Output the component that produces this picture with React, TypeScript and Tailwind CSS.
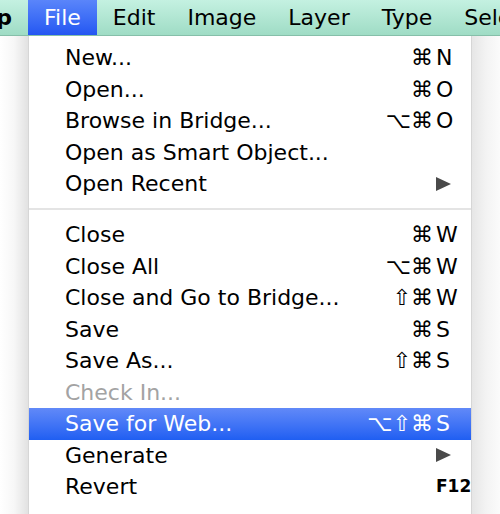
const FONT = { fontFamily: '"DejaVu Sans", "Lucida Grande", sans-serif' };

type Item =
  | { kind: "item"; label: string; mods?: string; key?: string; sub?: boolean; disabled?: boolean; active?: boolean; fkey?: string }
  | { kind: "sep" };

const items: Item[] = [
  { kind: "item", label: "New...", mods: "⌘", key: "N" },
  { kind: "item", label: "Open...", mods: "⌘", key: "O" },
  { kind: "item", label: "Browse in Bridge...", mods: "⌥⌘", key: "O" },
  { kind: "item", label: "Open as Smart Object..." },
  { kind: "item", label: "Open Recent", sub: true },
  { kind: "sep" },
  { kind: "item", label: "Close", mods: "⌘", key: "W" },
  { kind: "item", label: "Close All", mods: "⌥⌘", key: "W" },
  { kind: "item", label: "Close and Go to Bridge...", mods: "⇧⌘", key: "W" },
  { kind: "item", label: "Save", mods: "⌘", key: "S" },
  { kind: "item", label: "Save As...", mods: "⇧⌘", key: "S" },
  { kind: "item", label: "Check In...", disabled: true },
  { kind: "item", label: "Save for Web...", mods: "⌥⇧⌘", key: "S", active: true },
  { kind: "item", label: "Generate", sub: true },
  { kind: "item", label: "Revert", fkey: "F12" },
];

function Arrow() {
  return (
    <svg width="15" height="14" viewBox="0 0 15 14">
      <polygon points="0,0 15,7 0,14" fill="#4a4a4a" />
    </svg>
  );
}

function MenuRow({ item }: { item: Extract<Item, { kind: "item" }> }) {
  const base = item.active
    ? "bg-gradient-to-b from-[#6189f8] to-[#1f5ef2] text-white"
    : item.disabled
      ? "text-[#a3a3a3]"
      : "text-black";
  return (
    <div className={`flex h-[31.5px] items-center pl-[36px] ${base}`}>
      <span className="flex-1 whitespace-nowrap">{item.label}</span>
      <span className="whitespace-nowrap text-right">{item.mods ?? ""}</span>
      <span className="flex w-[38px] items-center pl-[3px]">
        {item.key}
        {item.sub && <Arrow />}
        {item.fkey && <span className="text-[17px] font-bold">{item.fkey}</span>}
      </span>
    </div>
  );
}

export default function App() {
  const bar = ["Edit", "Image", "Layer", "Type", "Select"];
  return (
    <div className="flex h-[514px] w-[500px] flex-col overflow-hidden bg-white text-[22px]" style={FONT}>
      <div className="flex h-[36px] shrink-0 items-stretch overflow-hidden border-b border-[#86bfa9] bg-gradient-to-b from-[#c4f1e1] to-[#9fdcc5] text-black">
        <div className="flex w-[12px] shrink-0 justify-end overflow-hidden">
          <span className="flex items-center whitespace-nowrap font-bold">Photoshop</span>
        </div>
        <div className="ml-[16px] flex shrink-0 items-center bg-gradient-to-b from-[#5a85fa] to-[#2456f2] px-[16px] text-white">File</div>
        {bar.map((b) => (
          <div key={b} className="flex shrink-0 items-center whitespace-nowrap px-[16px]">
            {b}
          </div>
        ))}
      </div>
      <div className="flex flex-1">
        <div className="w-[28px] shrink-0 bg-gradient-to-r from-white via-[#f7f7f7] to-[#e2e2e2]" />
        <div className="w-[444px] shrink-0 border-x border-[#d6d6d6] bg-white pt-[6px]">
          {items.map((it, i) =>
            it.kind === "sep" ? (
              <div key={i} className="flex h-[19.5px] items-center">
                <div className="h-[2px] w-full bg-[#e4e4e4]" />
              </div>
            ) : (
              <MenuRow key={i} item={it} />
            ),
          )}
        </div>
        <div className="flex-1 bg-gradient-to-r from-[#e6e6e6] via-[#f3f3f3] to-[#fbfbfb]" />
      </div>
    </div>
  );
}
